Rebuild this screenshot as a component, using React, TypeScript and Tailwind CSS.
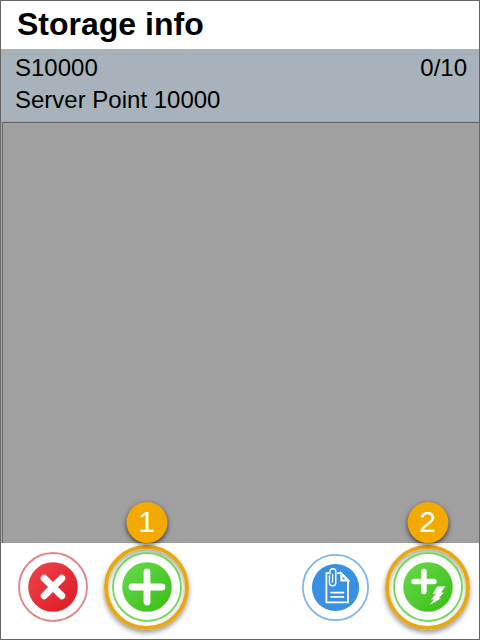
import type { ReactNode } from "react";

type CalloutProps = {
    label: string;
    children: ReactNode;
};

const Callout = ({ label, children }: CalloutProps) => (
    <div className="relative size-[85px] rounded-full border-4 border-[#e8a812] flex items-center justify-center shadow-[0_3px_5px_rgba(0,0,0,0.4),inset_0_3px_5px_rgba(0,0,0,0.35)]">
        {children}
        <span className="absolute bottom-full left-1/2 -translate-x-1/2 mb-1.5 size-[41px] rounded-full bg-[#f2a900] text-white text-3xl leading-none flex items-center justify-center shadow-[0_2px_5px_rgba(0,0,0,0.65)]">
            {label}
        </span>
    </div>
);

const CancelIcon = () => (
    <svg viewBox="0 0 70 70" className="size-[70px]" aria-hidden="true">
        <defs>
            <linearGradient id="red" x1="0" y1="0" x2="1" y2="1">
                <stop offset="0" stopColor="#ee454c" />
                <stop offset="1" stopColor="#dc1822" />
            </linearGradient>
        </defs>
        <circle cx="35" cy="35" r="34" fill="#fff" stroke="#e3868b" strokeWidth="1.9" />
        <circle cx="35" cy="35" r="24.8" fill="url(#red)" />
        <path
            d="M26.2 26.2 43.8 43.8M43.8 26.2 26.2 43.8"
            stroke="#fff"
            strokeWidth="7"
            strokeLinecap="round"
        />
    </svg>
);

const AddIcon = () => (
    <svg viewBox="0 0 70 70" className="size-[70px]" aria-hidden="true">
        <defs>
            <linearGradient id="green" x1="0" y1="0" x2="1" y2="1">
                <stop offset="0" stopColor="#68da4c" />
                <stop offset="1" stopColor="#38bd14" />
            </linearGradient>
        </defs>
        <circle cx="35" cy="35" r="34" fill="#fff" stroke="#6fda5c" strokeWidth="1.9" />
        <circle cx="35" cy="35" r="24.8" fill="url(#green)" />
        <path
            d="M35 20V50M20 35H50"
            stroke="#fff"
            strokeWidth="6.8"
            strokeLinecap="round"
        />
    </svg>
);

const DocumentIcon = () => (
    <svg viewBox="0 0 67 67" className="size-[67px]" fill="none" aria-hidden="true">
        <circle cx="33.5" cy="33.5" r="32.6" fill="#fff" stroke="#80b5ec" strokeWidth="1.8" />
        <circle cx="33.5" cy="33.5" r="23.6" fill="#398fe2" />
        <g stroke="#fff" strokeWidth="1.8">
            <path d="M27 19.2H24.4V48.4H46V26.4L39.2 19.2H35" />
            <path d="M39.2 19.2V26.6H46.4Z" fill="#fff" />
            <path d="M40.6 22.6V25.3H43.4Z" fill="#398fe2" stroke="none" />
            <path d="M28.4 38.6H42.2M28.4 42.9H42.2" />
            <path
                d="M27.4 22V28.6a3.2 3.2 0 0 0 6.4 0V17.6a2.9 2.9 0 0 0-5.8 0V20M30.6 20.2V28"
                strokeLinecap="round"
                strokeWidth="1.4"
            />
        </g>
    </svg>
);

const QuickAddIcon = () => (
    <svg viewBox="0 0 70 70" className="size-[70px]" aria-hidden="true">
        <circle cx="35" cy="35" r="34" fill="#fff" stroke="#6fda5c" strokeWidth="1.9" />
        <circle cx="35" cy="35" r="24.8" fill="url(#green)" />
        <path
            d="M31 19.5V39.5M21 29.5H41"
            stroke="#fff"
            strokeWidth="5.4"
            strokeLinecap="round"
        />
        <path
            d="M44.2 34.6 52.4 34.2 48 40.6 50.8 40.4 45.8 46.2 48.2 46.2 36.2 53.2 41 47.4 38 47.4 42.6 42.2 39.6 42Z"
            fill="#fff"
        />
    </svg>
);

const App = () => {
    return (
        <main className="min-h-screen flex flex-col bg-white border border-[#666] text-black font-['Liberation_Sans',Arial,sans-serif]">
            <h1 className="h-12 px-4 text-[32px] leading-[46px] font-bold">
                Storage info
            </h1>

            <section className="flex justify-between pl-3.5 pr-3 pt-[3px] pb-[5px] bg-[#a8b2ba] text-2xl leading-8">
                <div>
                    <p>S10000</p>
                    <p>Server Point 10000</p>
                </div>
                <p>0/10</p>
            </section>

            <section
                aria-label="Stored items"
                className="flex-1 border-t border-[#a2a6a9] bg-[#a8b2ba] pl-px flex"
            >
                <div className="flex-1 bg-[#a0a0a0] border-t border-l border-[#666]" />
            </section>

            <footer className="h-24 pl-[17px] pr-[9px] pb-2 flex items-center justify-between">
                <div className="flex items-center gap-4">
                    <button type="button" aria-label="Cancel" className="rounded-full">
                        <CancelIcon />
                    </button>
                    <Callout label="1">
                        <button type="button" aria-label="Add" className="rounded-full">
                            <AddIcon />
                        </button>
                    </Callout>
                </div>
                <div className="flex items-center gap-4">
                    <button type="button" aria-label="Documents" className="rounded-full">
                        <DocumentIcon />
                    </button>
                    <Callout label="2">
                        <button type="button" aria-label="Quick add" className="rounded-full">
                            <QuickAddIcon />
                        </button>
                    </Callout>
                </div>
            </footer>
        </main>
    );
};

export default App;
